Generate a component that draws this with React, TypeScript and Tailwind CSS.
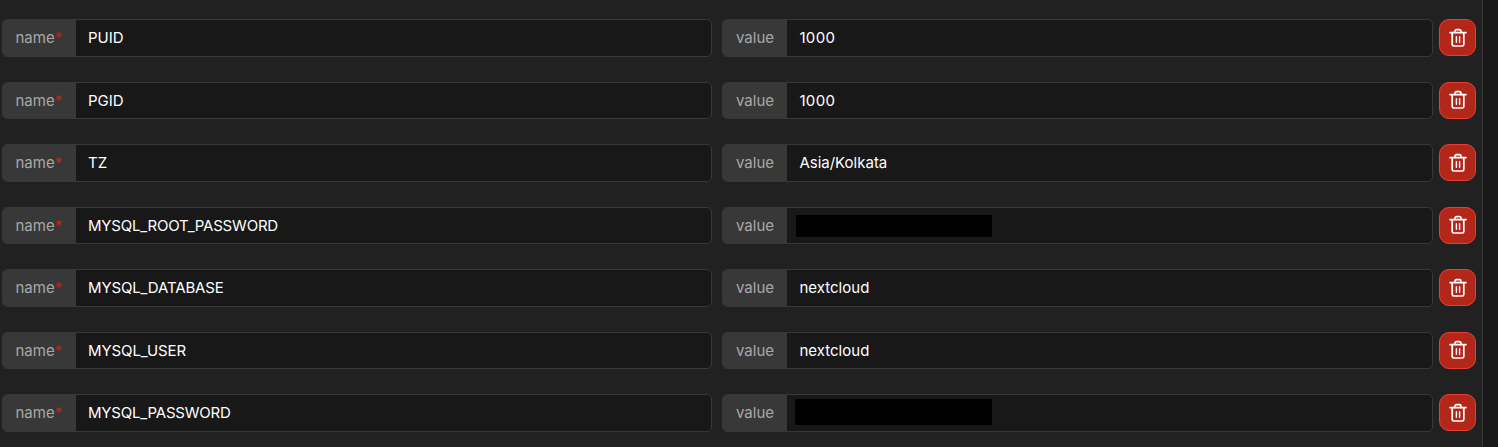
type Variable = { name: string; value?: string; nameClass?: string; valueClass?: string; mask?: string };

const variables: Variable[] = [
  { name: "PUID", value: "1000", valueClass: "tracking-[0.35px]" },
  { name: "PGID", value: "1000", valueClass: "tracking-[0.35px]" },
  { name: "TZ", value: "Asia/Kolkata" },
  { name: "MYSQL_ROOT_PASSWORD", nameClass: "tracking-[-0.2px]", mask: "ml-[9px] w-[196px] h-[22px]" },
  { name: "MYSQL_DATABASE", nameClass: "tracking-[-0.14px]", value: "nextcloud", valueClass: "tracking-[0.03px]" },
  { name: "MYSQL_USER", nameClass: "tracking-[-0.1px]", value: "nextcloud", valueClass: "tracking-[0.03px]" },
  { name: "MYSQL_PASSWORD", nameClass: "tracking-[-0.2px]", mask: "ml-2 mb-[1.6px] w-[197px] h-[26px]" },
];

function TrashIcon() {
  return (
    <svg
      width="19"
      height="19"
      viewBox="0 0 19 19"
      fill="none"
      stroke="currentColor"
      strokeWidth="1.7"
      strokeLinecap="round"
      strokeLinejoin="round"
      className="mb-[0.5px]"
    >
      <path d="M2 4.6H18" />
      <path d="M7 4.4V3.3Q7 1.7 8.6 1.7H11.4Q13 1.7 13 3.3V4.4" />
      <path d="M4.2 4.8V16.4Q4.2 18 5.8 18H14.2Q15.8 18 15.8 16.4V4.8" />
      <path d="M8.4 8.8V14.2M11.6 8.8V14.2" strokeWidth="1.4" />
    </svg>
  );
}

function Row({ item }: { item: Variable }) {
  return (
    <div className="flex h-[37.5px]">
      <div className="flex w-[710px] overflow-hidden rounded-[5px] border border-[#383838] bg-[#181818]">
        <label className="flex w-[73px] shrink-0 items-center bg-[#383838] pt-[0.6px] pl-[12.5px] text-[#a8a8a8]">
          name<span className="text-[#b8271b]">*</span>
        </label>
        <div className="flex items-center pt-[0.6px] pl-3 text-white">
          <span className={item.nameClass}>{item.name}</span>
        </div>
      </div>
      <div className="ml-2.5 flex w-[711px] overflow-hidden rounded-[5px] border border-[#383838] bg-[#181818]">
        <label className="flex w-16 shrink-0 items-center bg-[#383838] pt-[0.6px] pl-[13px] text-[#a8a8a8]">value</label>
        <div className="flex items-center pt-[0.6px] text-white">
          {item.mask ? (
            <span className={`${item.mask} bg-black`} />
          ) : (
            <span className={`ml-[12.4px] ${item.valueClass ?? ""}`}>{item.value}</span>
          )}
        </div>
      </div>
      <button
        aria-label="Delete"
        className="ml-1.5 flex size-[37px] items-center justify-center rounded-[10px] border border-[#e93f32] bg-[#b3261a] text-white"
      >
        <TrashIcon />
      </button>
    </div>
  );
}

export default function App() {
  return (
    <main className="flex h-[447px] w-[1498px] overflow-hidden bg-[#181818] font-['Inter',sans-serif] text-[15px] leading-[22px]">
      <section className="flex w-[1483px] flex-col gap-[25px] border-r border-[#383838] bg-[#212121] pt-[19px] pl-0.5">
        {variables.map((item) => (
          <Row key={item.name} item={item} />
        ))}
      </section>
    </main>
  );
}
